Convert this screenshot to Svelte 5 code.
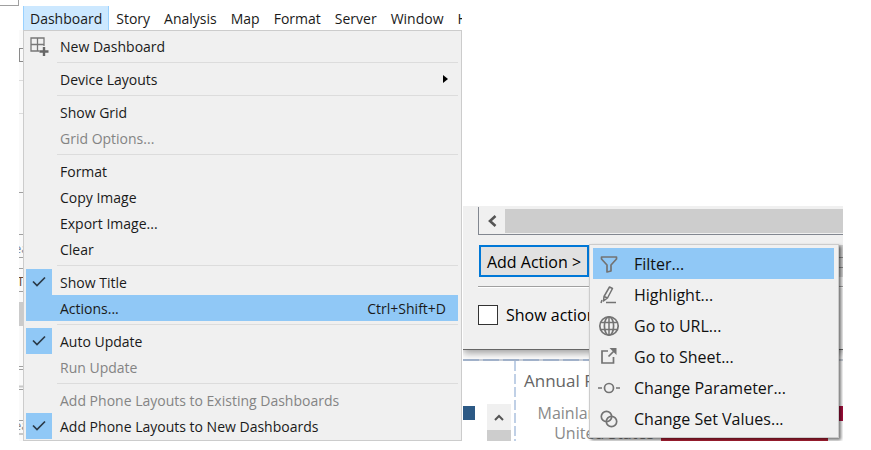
<script>
  const menus = ['Dashboard', 'Story', 'Analysis', 'Map', 'Format', 'Server', 'Window', 'Help'];
  const groups = [
    [{ label: 'New Dashboard', icon: true }],
    [{ label: 'Device Layouts', submenu: true }],
    [{ label: 'Show Grid' }, { label: 'Grid Options...', disabled: true }],
    [{ label: 'Format' }, { label: 'Copy Image' }, { label: 'Export Image...' }, { label: 'Clear' }],
    [{ label: 'Show Title', checked: true }, { label: 'Actions...', keys: 'Ctrl+Shift+D', active: true }],
    [{ label: 'Auto Update', checked: true }, { label: 'Run Update', disabled: true }],
    [
      { label: 'Add Phone Layouts to Existing Dashboards', disabled: true },
      { label: 'Add Phone Layouts to New Dashboards', checked: true }
    ]
  ];
  const actions = ['Filter...', 'Highlight...', 'Go to URL...', 'Go to Sheet...', 'Change Parameter...', 'Change Set Values...'];
</script>

<main>
  <div class="corner"></div>
  <section class="left">
    <nav class="menubar">
      {#each menus as m, i}
        <button class:open={i === 0}>{m}</button>
      {/each}
    </nav>
    <div class="body">
      <svg class="strip" width="4" height="411" viewBox="0 0 4 411" aria-hidden="true">
        <rect width="4" height="411" fill="#fafafa" />
        <path d="M0 18.500H4M.5 18V31M0 31.500H4" stroke="#8a8a8a" fill="none" />
        <path d="M0 50.500H4M0 83.500H4" stroke="#dcdcdc" />
        <path d="M0 162.500H4M0 204.500H4M0 227.500H4M0 238.500H4M0 261.500H4M0 336.500H4M0 339.500H4M0 359.500H4M0 390.500H4" stroke="#a0a0a0" />
        <path d="M0 356.500H4M0 404H4" stroke="#c8c8c8" stroke-width="2" />
        <rect y="272" width="4" height="24" fill="#cbcbcb" />
        <text x="-5" y="223" font-size="13" fill="#7d8ba0">ea</text>
        <text x="-2" y="256" font-size="13" fill="#6b4632">T</text>
        <text x="-5" y="400" font-size="13" fill="#888">ea</text>
      </svg>
      <div class="menu" role="menu">
        {#each groups as g, gi}
          {#if gi}<hr />{/if}
          {#each g as it}
            <button
              class="item"
              class:active={it.active}
              role={it.checked ? 'menuitemcheckbox' : 'menuitem'}
              aria-checked={it.checked ? true : undefined}
              disabled={it.disabled}
            >
              <span class="mark" class:on={it.checked}>
                {#if it.checked}
                  <svg width="14" height="12" viewBox="0 0 14 12"><path d="M1 5.500L5 9.500L13 1.500" fill="none" stroke="#2b3a48" stroke-width="1.700" /></svg>
                {:else if it.icon}
                  <svg width="19" height="19" viewBox="0 0 19 19" fill="none" stroke="#777">
                    <path d="M9.500 14H1V1H14V9M7.500 1V14M1 7.500H14" stroke-width="1.300" />
                    <path d="M14 10V19M9.500 14.500H18.500" stroke="#666" stroke-width="2.400" />
                  </svg>
                {/if}
              </span>
              <span class="label">{it.label}</span>
              {#if it.keys}<span class="keys">{it.keys}</span>{/if}
              {#if it.submenu}<svg class="arrow" width="5" height="8" viewBox="0 0 5 8"><path d="M0 0L5 4L0 8Z" fill="#000" /></svg>{/if}
            </button>
          {/each}
        {/each}
      </div>
    </div>
  </section>

  <section class="right">
    <div class="dialog">
      <div class="scroller">
        <button aria-label="Scroll left"><svg width="9" height="12" viewBox="0 0 9 12"><path d="M7.500 1L2 6L7.500 11" fill="none" stroke="#555" stroke-width="2.600" /></svg></button>
        <div class="thumb"></div>
      </div>
      <div class="addrow">
        <div class="anchor">
          <button class="add" aria-haspopup="menu">Add Action &gt;</button>
          <div class="popup" role="menu">
            {#each actions as a, i}
              <button role="menuitem" class:active={i === 0}>
                <svg width="24" height="24" viewBox="0 0 24 24" fill="none" stroke="#737373" stroke-width="1.700">
                  {#if i === 0}
                    <path d="M4.500 5H19.500V7L14 13V19L10 20V13L4.500 7Z" stroke-linejoin="round" />
                  {:else if i === 1}
                    <path d="M12.500 4L15.500 5.500L10.500 15L6.500 18L7 13.500ZM7 13.500L10.500 15" stroke-width="1.500" stroke-linejoin="round" />
                    <path d="M5 17L4 20M9 19.500H19" stroke-width="1.500" />
                  {:else if i === 2}
                    <circle cx="12" cy="12" r="9.200" /><ellipse cx="12" cy="12" rx="4.600" ry="9.200" />
                    <path d="M12 3V21M4 8.500H20M4 15.500H20" stroke-width="1.500" />
                  {:else if i === 3}
                    <path d="M11 6H5V18H16.500V12M11.500 11.500L17 6" /><path d="M12.500 3H19.500V10Z" fill="#737373" stroke="none" />
                  {:else if i === 4}
                    <circle cx="12" cy="12" r="4.500" /><path d="M1 12H5M19 12H23" />
                  {:else}
                    <circle cx="9.500" cy="9.500" r="5.200" /><circle cx="14.500" cy="14.500" r="5.200" />
                  {/if}
                </svg>
                <span>{a}</span>
              </button>
            {/each}
          </div>
        </div>
        <div class="field"></div>
      </div>
      <hr />
      <label class="check"><input type="checkbox" /><span>Show actions</span></label>
    </div>
    <div class="sheet">
      <div class="legend">
        <i class="swatch"></i>
        <div class="vbar">
          <button aria-label="Scroll up"><svg width="10" height="7" viewBox="0 0 10 7"><path d="M1 6L5 2L9 6" fill="none" stroke="#555" stroke-width="2" /></svg></button>
          <div></div>
        </div>
      </div>
      <div class="chart">
        <h2>Annual Profit</h2>
        <div class="bar"><span>Mainland China</span><i></i></div>
        <div class="bar second"><span>United States</span><i></i></div>
      </div>
    </div>
  </section>
</main>

<style>
  :global(body) { margin: 0; background: #fff; }
  main {
    position: relative;
    display: grid;
    grid-template-columns: 444fr 380fr;
    padding: 6px 28px 0 19px;
    font-family: 'Open Sans', 'Noto Sans', sans-serif;
    font-size: 14px;
    color: #1a1a1a;
  }
  button { font: inherit; color: inherit; border: 0; margin: 0; padding: 0; background: none; text-align: left; }
  hr { border: 0; margin: 0; }
  .corner {
    position: absolute; left: 0; top: 0; width: 18px; height: 5px;
    border-right: 1px solid #a0a0a0; border-bottom: 1px solid #a0a0a0;
  }
  .left { min-width: 0; padding-right: 1px; }
  .menubar { display: flex; height: 24px; padding-left: 4px; overflow: hidden; }
  .menubar button { padding: 2px 7px 0; flex: none; line-height: 22px; white-space: nowrap; }
  .menubar .open { background: #cce8ff; box-shadow: inset 1px 0 #99d1ff, inset -1px 0 #99d1ff; }
  .body { display: flex; }
  .strip { flex: none; display: block; }
  .menu {
    flex: 1; min-width: 0; box-sizing: border-box;
    background: #f0f0f0; border: 1px solid #ccc; padding: 2px 3px 1px 2px;
  }
  .menu hr { height: 7px; margin-left: 31px; background: linear-gradient(#dcdcdc, #dcdcdc) 0 3px / 100% 1px no-repeat; }
  .item { display: flex; align-items: center; width: 100%; height: 26px; }
  .item:disabled { color: #848484; }
  .mark { width: 26px; height: 26px; display: flex; align-items: center; justify-content: center; margin-right: 8px; }
  .mark svg { flex: none; }
  .on, .active { background: #90c8f6; }
  .label, .keys { padding-top: 2px; line-height: 24px; white-space: nowrap; }
  .label { flex: 1; }
  .keys { margin-right: 12px; }
  .arrow { margin-right: 10px; }

  .right { min-width: 0; margin-top: 200px; height: 235px; overflow: hidden; position: relative; }
  .dialog {
    position: relative; z-index: 1; background: #f0f0f0; padding: 1px 0 24px 15px;
    border-bottom: 1px solid #666; box-shadow: 0 3px 8px #0006;
  }
  .scroller {
    display: flex; height: 24px; padding: 2px 0 1px;
    border-left: 1px solid #828790; border-bottom: 1px solid #828790;
  }
  .scroller button { width: 26px; display: flex; align-items: center; justify-content: center; }
  .thumb { flex: 1; background: #cdcdcd; }
  .addrow { display: flex; justify-content: space-between; padding: 10px 0 9px; }
  .anchor { position: relative; margin-left: 1px; }
  .add {
    display: block; box-sizing: border-box; width: 110px; height: 32px; padding-top: 2px; text-align: center;
    background: #e1e1e1; border: 2px solid #0078d7; font-size: 16px; line-height: 26px; color: #000;
    white-space: nowrap;
  }
  .field { width: 8px; height: 32px; background: linear-gradient(#888, #888) 0 12px / 100% 1px no-repeat, linear-gradient(#888, #888) 0 22px / 100% 1px no-repeat, #d0d0d0; }
  .dialog > hr { height: 1px; background: #a0a0a0; border-bottom: 1px solid #fff; }
  .check { display: flex; align-items: center; gap: 8px; padding-top: 17px; font-size: 16px; line-height: 20px; color: #000; }
  .check input { appearance: none; box-sizing: border-box; width: 20px; height: 20px; margin: 0; background: #fff; border: 1px solid #333; }
  .popup {
    position: absolute; left: 110px; top: -1px; width: 250px; box-sizing: border-box;
    background: #f0f0f0; border: 1px solid #ccc; padding: 3px; box-shadow: 2px 2px 3px #0008;
  }
  .popup button { display: flex; align-items: center; width: 241px; height: 31px; font-size: 16px; color: #111; white-space: nowrap; }
  .popup svg { margin: 0 13px 0 4px; flex: none; }
  .popup span { padding-top: 2px; line-height: 29px; }

  .sheet {
    display: flex; margin-top: 9px; padding-top: 2px;
    background: repeating-linear-gradient(90deg, #a3b4cc 0 16px, #c9cfd8 16px 20px) 0 0 / 100% 2px no-repeat;
  }
  .legend {
    display: flex; align-items: flex-start; justify-content: space-between; width: 48px; padding: 43px 5px 0 0;
    background: repeating-linear-gradient(#c0d0e6 0 10px, #fff 10px 13px) 100% 0 / 2px 100% no-repeat;
  }
  .swatch { width: 12px; height: 14px; margin-top: 2px; background: #2c5985; }
  .vbar { width: 24px; background: #f0f0f0; }
  .vbar button { display: flex; width: 24px; height: 26px; align-items: center; justify-content: center; }
  .vbar div { height: 14px; background: #cdcdcd; }
  .chart { flex: 1; min-width: 0; padding-top: 8px; }
  h2 { margin: 0 0 10px 8px; font-weight: 400; font-size: 17px; line-height: 24px; color: #666; }
  .bar { display: flex; height: 20px; line-height: 20px; font-size: 16px; color: #8a8a8a; }
  .bar span { width: 138px; text-align: right; flex: none; white-space: nowrap; }
  .bar i { flex: 1; height: 15px; margin: 3px 0 0 7px; background: #a50f3c; }
  .second i { margin: 10px 15px 0 7px; background: #b92238; }
</style>
